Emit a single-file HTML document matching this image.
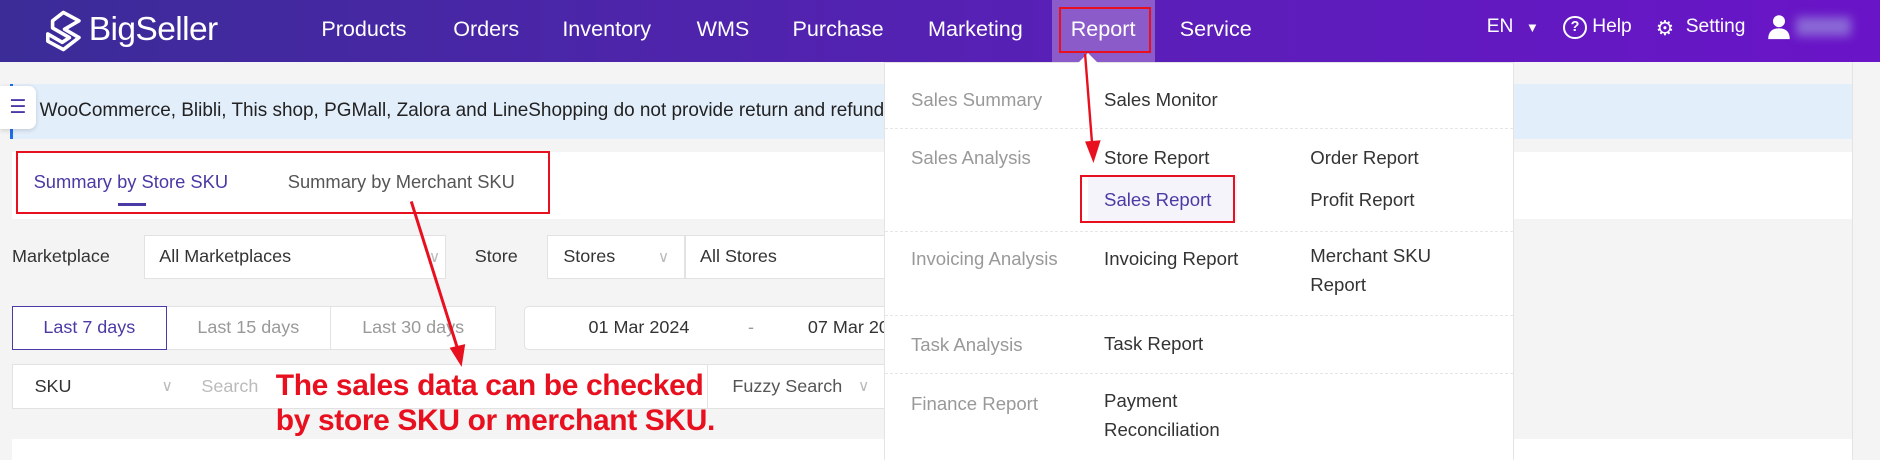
<!DOCTYPE html>
<html><head><meta charset="utf-8"><style>
html,body{margin:0;padding:0;width:1880px;height:460px;overflow:hidden;background:#f4f4f4;font-family:"Liberation Sans",sans-serif}
#w{width:1568px;height:384px;position:relative;zoom:1.19898;background:#f4f4f4;overflow:hidden}
.a{position:absolute;white-space:nowrap}
.nav{position:absolute;left:0;top:0;width:1568px;height:52px;background:linear-gradient(90deg,#3b2c98,#5a1fb8 60%,#6a14c8)}
.ni{position:absolute;top:13px;color:#fff;font-size:18px}
.box{position:absolute;background:#fff;border:1px solid #e2e2e2;box-sizing:border-box;font-size:15px;color:#333}
.dd{position:absolute;left:737px;top:52px;width:526px;height:340px;background:#fff;border:1px solid #e4e4e4;box-sizing:border-box}
.dl{position:absolute;left:22px;color:#999;font-size:15.5px}
.di{position:absolute;color:#333;font-size:15.5px}
.hr{position:absolute;left:0;width:524px;border-top:1px dashed #e6e6e6}
.chev{color:#bbb;font-size:13px;position:absolute}
</style></head><body><div id="w">
<div class="nav"></div>
<svg class="a" style="left:36px;top:8px" width="34" height="36" viewBox="0 0 34 36"><path d="M17 2 L30 9 L18 16 L30 23 L17 33 L4 26 L4 20 L16 27 L22 23 L8 15 L8 9 Z" fill="none" stroke="#fff" stroke-width="3" stroke-linejoin="round"/></svg>
<div class="a" style="left:74px;top:9px;color:#fff;font-size:28px;letter-spacing:-0.5px">BigSeller</div>
<div class="a" style="left:877px;top:0;width:86px;height:52px;background:#8b5cc9"></div>
<div class="a" style="left:883px;top:6px;width:74px;height:35px;border:2px solid #e8101f"></div>
<div class="ni" style="left:268px">Products</div>
<div class="ni" style="left:378px">Orders</div>
<div class="ni" style="left:469px">Inventory</div>
<div class="ni" style="left:581px">WMS</div>
<div class="ni" style="left:661px">Purchase</div>
<div class="ni" style="left:774px">Marketing</div>
<div class="ni" style="left:893px">Report</div>
<div class="ni" style="left:984px">Service</div>
<div class="ni" style="left:1240px;font-size:16px">EN <span style="font-size:11px;margin-left:6px">▼</span></div>
<div class="a" style="left:1304px;top:13px;width:16px;height:16px;border:2px solid #fff;border-radius:50%;color:#fff;font-size:12px;text-align:center;line-height:16px;font-weight:bold">?</div>
<div class="ni" style="left:1328px;font-size:16px">Help</div>
<div class="ni" style="left:1381px;font-size:17px">⚙</div>
<div class="ni" style="left:1406px;font-size:16px">Setting</div>
<svg class="a" style="left:1474px;top:12px" width="20" height="22"><circle cx="10" cy="6" r="5" fill="#fff"/><path d="M1 21 Q1 12 10 12 Q19 12 19 21Z" fill="#fff"/></svg>
<div class="a" style="left:1498px;top:14px;width:46px;height:16px;background:#8a68d6;filter:blur(4px)"></div>
<!-- notice -->
<div class="a" style="left:8px;top:70px;width:1537px;height:46px;background:#e3eefb;border-left:3px solid #1e6fe6"></div>
<div class="a" style="left:33px;top:83px;font-size:15.8px;color:#222">WooCommerce, Blibli, This shop, PGMall, Zalora and LineShopping do not provide return and refund</div>
<div class="a" style="left:0;top:72px;width:30px;height:36px;background:#fff;border-radius:0 6px 6px 0;box-shadow:0 1px 4px rgba(0,0,0,.15);color:#4a3aa5;font-size:16px;text-align:center;line-height:36px">☰</div>
<!-- tabs -->
<div class="a" style="left:10px;top:127px;width:1535px;height:56px;background:#fff"></div>
<div class="a" style="left:28px;top:143px;font-size:15.3px;color:#4a3aa5">Summary by Store SKU</div>
<div class="a" style="left:98px;top:169px;width:24px;height:3px;background:#4a3aa5"></div>
<div class="a" style="left:240px;top:143px;font-size:15.3px;color:#555">Summary by Merchant SKU</div>
<div class="a" style="left:13px;top:126px;width:442px;height:49px;border:2px solid #e8101f"></div>
<!-- filters -->
<div class="a" style="left:10px;top:205px;font-size:15px;color:#333">Marketplace</div>
<div class="box" style="left:120px;top:196px;width:252px;height:37px;padding:8px 12px">All Marketplaces<span class="chev" style="right:4px;top:10px">∨</span></div>
<div class="a" style="left:396px;top:205px;font-size:15px;color:#333">Store</div>
<div class="box" style="left:456px;top:196px;width:115px;height:37px;padding:8px 13px">Stores<span class="chev" style="right:12px;top:10px">∨</span></div>
<div class="box" style="left:571px;top:196px;width:180px;height:37px;padding:8px 12px">All Stores</div>
<div class="box" style="left:10px;top:255px;width:129px;height:37px;border-color:#4a3aa5;color:#4a3aa5;text-align:center;line-height:35px">Last 7 days</div>
<div class="box" style="left:139px;top:255px;width:137px;height:37px;color:#999;text-align:center;line-height:35px;border-left:0">Last 15 days</div>
<div class="box" style="left:276px;top:255px;width:138px;height:37px;color:#999;text-align:center;line-height:35px;border-left:0">Last 30 days</div>
<div class="box" style="left:437px;top:255px;width:320px;height:37px;border-radius:4px;line-height:35px"><span class="a" style="left:53px">01 Mar 2024</span><span class="a" style="left:186px;color:#999">-</span><span class="a" style="left:236px">07 Mar 2024</span></div>
<div class="box" style="left:10px;top:304px;width:147px;height:37px;padding:9px 18px">SKU<span class="chev" style="right:12px;top:10px">∨</span></div>
<div class="box" style="left:156px;top:304px;width:435px;height:37px;padding:9px 12px;color:#bbb;border-left:0">Search</div>
<div class="box" style="left:590px;top:304px;width:170px;height:37px;padding:9px 20px;color:#555">Fuzzy Search<span class="chev" style="right:34px;top:10px">∨</span></div>
<div class="a" style="left:10px;top:366px;width:1535px;height:30px;background:#fff"></div>
<!-- dropdown -->
<div class="dd">
<svg class="a" style="left:160px;top:-9px" width="20" height="10"><path d="M0 10 L10 0 L20 10Z" fill="#fff"/></svg>
<div class="dl" style="top:21px">Sales Summary</div><div class="di" style="left:183px;top:21px">Sales Monitor</div>
<div class="hr" style="top:54px"></div>
<div class="dl" style="top:70px">Sales Analysis</div><div class="di" style="left:183px;top:70px">Store Report</div><div class="di" style="left:355px;top:70px">Order Report</div>
<div class="a" style="left:170px;top:94px;width:124px;height:38px;background:#f6f4fb"></div>
<div class="di" style="left:183px;top:105px;color:#4a3aa5">Sales Report</div><div class="di" style="left:355px;top:105px">Profit Report</div>
<div class="a" style="left:163px;top:93px;width:126px;height:37px;border:2px solid #e8101f"></div>
<div class="hr" style="top:140px"></div>
<div class="dl" style="top:154px">Invoicing Analysis</div><div class="di" style="left:183px;top:154px">Invoicing Report</div><div class="di" style="left:355px;top:149px;line-height:24px">Merchant SKU<br>Report</div>
<div class="hr" style="top:210px"></div>
<div class="dl" style="top:226px">Task Analysis</div><div class="di" style="left:183px;top:225px">Task Report</div>
<div class="hr" style="top:258px"></div>
<div class="dl" style="top:275px">Finance Report</div><div class="di" style="left:183px;top:270px;line-height:24px">Payment<br>Reconciliation</div>
</div>
<div class="a" style="left:1545px;top:52px;width:23px;height:340px;background:#f4f4f4;border-left:1px solid #e4e4e4"></div>
<!-- arrows -->
<svg class="a" style="left:0;top:0" width="1568" height="384">
<line x1="905" y1="45" x2="911" y2="122" stroke="#e8101f" stroke-width="2"/>
<path d="M905 118 L912 136 L918 117Z" fill="#e8101f"/>
<line x1="343" y1="168" x2="382" y2="292" stroke="#e8101f" stroke-width="2.5"/>
<path d="M375 290 L385 306 L388 287Z" fill="#e8101f"/>
</svg>
<div class="a" style="left:230px;top:308px;color:#e8101f;font-size:25px;font-weight:bold;line-height:29px;letter-spacing:-0.3px">The sales data can be checked<br>by store SKU or merchant SKU.</div>
</div></body></html>
